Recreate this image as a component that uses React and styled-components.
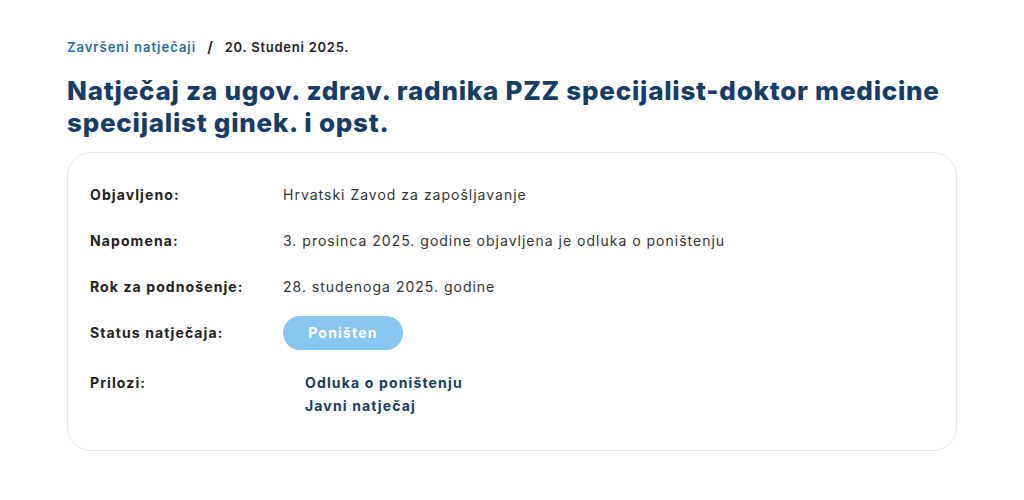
import React from "react";
import styled, { createGlobalStyle } from "styled-components";

const Global = createGlobalStyle`
  html, body { margin: 0; padding: 0; background: #fff; }
  body { font-family: Inter, "Noto Sans", sans-serif; }
`;

const Page = styled.main`
  padding: 37px 0 0 67px;
  width: 890px;
`;

const Breadcrumb = styled.nav`
  display: flex;
  align-items: center;
  gap: 11px;
  font-size: 13px;
  font-weight: 600;
  line-height: 20px;
  letter-spacing: 0.9px;
`;

const Crumb = styled.a`
  color: #2a6aab;
  text-decoration: none;
  letter-spacing: 1px;
`;

const Sep = styled.span`
  color: #222;
  font-size: 15px;
`;

const Current = styled.span`
  color: #222;
  letter-spacing: 0.75px;
`;

const Title = styled.h1`
  margin: 18px 0 13px;
  font-size: 26px;
  line-height: 32px;
  font-weight: 800;
  color: #163c68;
  letter-spacing: 0.75px;
`;

const Card = styled.section`
  border: 1px solid #e6e6e6;
  border-radius: 24px;
  padding: 19px 22px 33px;
`;

const Row = styled.div`
  display: grid;
  grid-template-columns: 193px 1fr;
  align-items: ${(p) => (p.$top ? "start" : "center")};
  min-height: 46px;
  padding-top: ${(p) => (p.$top ? "15px" : "0")};
  font-size: 14px;
  line-height: 24px;
  letter-spacing: 1px;
`;

const Label = styled.div`
  font-weight: 700;
  color: #222;
  letter-spacing: 1.1px;
`;

const Value = styled.div`
  color: #333;
`;

const Badge = styled.span`
  display: inline-flex;
  align-items: center;
  justify-content: center;
  width: 120px;
  height: 34px;
  border-radius: 17px;
  background: #86c6ef;
  color: #fff;
  font-weight: 700;
  font-size: 14px;
  letter-spacing: 1.2px;
`;

const Files = styled.ul`
  list-style: none;
  margin: 0;
  padding: 0 0 0 22px;
  line-height: 23px;
`;

const FileLink = styled.a`
  color: #163c68;
  font-weight: 700;
  text-decoration: none;
  letter-spacing: 1.15px;
`;

const rows = [
  ["Objavljeno:", "Hrvatski Zavod za zapošljavanje"],
  ["Napomena:", "3. prosinca 2025. godine objavljena je odluka o poništenju"],
  ["Rok za podnošenje:", "28. studenoga 2025. godine"],
];

export default function App() {
  return (
    <>
      <Global />
      <Page>
        <Breadcrumb>
          <Crumb href="#">Završeni natječaji</Crumb>
          <Sep>/</Sep>
          <Current>20. Studeni 2025.</Current>
        </Breadcrumb>
        <Title>
          Natječaj za ugov. zdrav. radnika PZZ specijalist-doktor medicine
          specijalist ginek. i opst.
        </Title>
        <Card>
          {rows.map(([l, v]) => (
            <Row key={l}>
              <Label>{l}</Label>
              <Value>{v}</Value>
            </Row>
          ))}
          <Row>
            <Label>Status natječaja:</Label>
            <div>
              <Badge>Poništen</Badge>
            </div>
          </Row>
          <Row $top>
            <Label>Prilozi:</Label>
            <Files>
              <li>
                <FileLink href="#">Odluka o poništenju</FileLink>
              </li>
              <li>
                <FileLink href="#">Javni natječaj</FileLink>
              </li>
            </Files>
          </Row>
        </Card>
      </Page>
    </>
  );
}
